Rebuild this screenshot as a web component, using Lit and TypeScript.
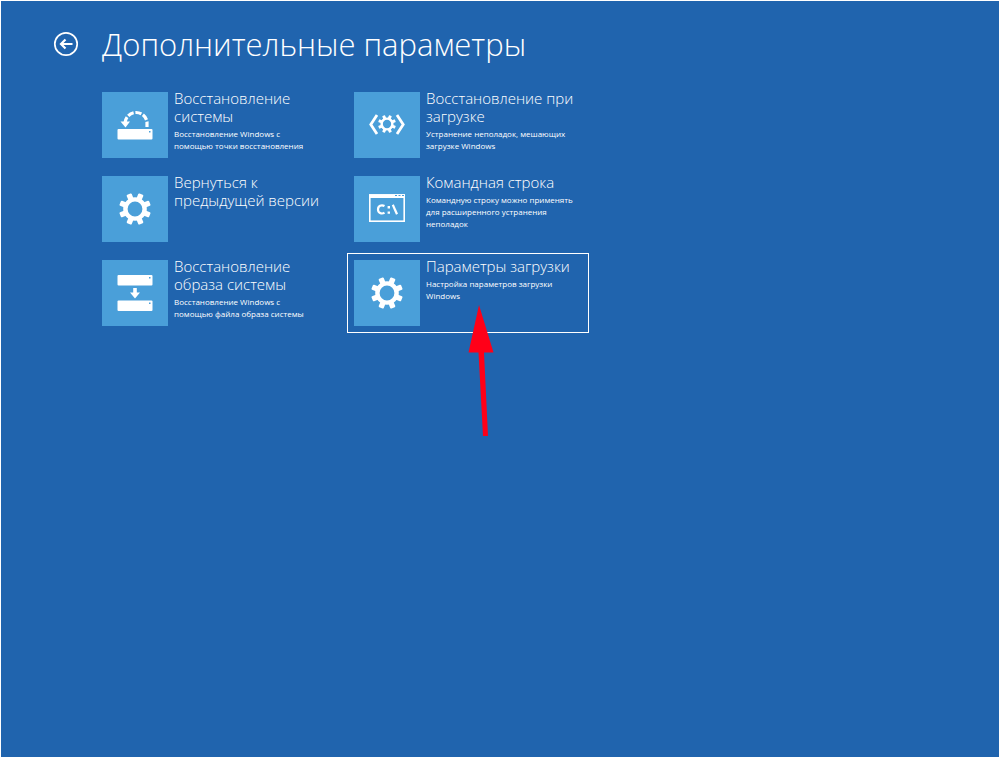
import { LitElement, html, svg, css, nothing } from "lit";
import { customElement, property, state } from "lit/decorators.js";
import { classMap } from "lit/directives/class-map.js";

type IconName = "restore" | "gear" | "image" | "startup" | "prompt";

interface Option {
  icon: IconName;
  title: string;
  text?: string;
}

const OPTIONS: Option[] = [
  { icon: "restore", title: "Восстановление системы", text: "Восстановление Windows с\nпомощью точки восстановления" },
  { icon: "startup", title: "Восстановление при загрузке", text: "Устранение неполадок, мешающих\nзагрузке Windows" },
  { icon: "gear", title: "Вернуться к предыдущей версии" },
  { icon: "prompt", title: "Командная строка", text: "Командную строку можно применять\nдля расширенного устранения\nнеполадок" },
  { icon: "image", title: "Восстановление образа системы", text: "Восстановление Windows с\nпомощью файла образа системы" },
  { icon: "gear", title: "Параметры загрузки", text: "Настройка параметров загрузки\nWindows" },
];

const TEETH = [22.5, 67.5, 112.5, 157.5, 202.5, 247.5, 292.5, 337.5];

// A ring with eight teeth, centred on the origin, about 16 units in radius.
const gear = svg`
  <circle r="9.6" fill="none" stroke="#fff" stroke-width="4.4"></circle>
  ${TEETH.map((a) => svg`<rect x="-2.7" y="-16" width="5.4" height="6" rx="1" fill="#fff" transform="rotate(${a})"></rect>`)}
`;

const ICONS = {
  gear: svg`<g transform="translate(33 33)">${gear}</g>`,
  startup: svg`
    <g transform="translate(33 32) scale(0.56)">${gear}</g>
    <path d="M23 23 16.8 32.5 23 42M43 23 49.2 32.5 43 42" fill="none" stroke="#fff" stroke-width="2.8"></path>
  `,
  restore: svg`
    <rect x="15.5" y="37" width="35" height="10.5" rx="1" fill="#fff"></rect>
    <rect x="47" y="39" width="1.5" height="1.5" fill="#4a9fd9"></rect>
    <path d="M23.2 31V30A11 11 0 0 1 45 30V35" fill="none" stroke="#fff" stroke-width="3.2" stroke-dasharray="6.2 1.8"></path>
    <path d="M18.5 29.5H28L23.5 35.5Z" fill="#fff"></path>
  `,
  image: svg`
    <rect x="15.5" y="15" width="35" height="10.5" rx="1" fill="#fff"></rect>
    <rect x="47" y="17" width="1.5" height="1.5" fill="#4a9fd9"></rect>
    <rect x="15.5" y="40.5" width="35" height="10.5" rx="1" fill="#fff"></rect>
    <rect x="47" y="42.5" width="1.5" height="1.5" fill="#4a9fd9"></rect>
    <path d="M31.2 28H34.8V32.5H38L33 38.5 28 32.5H31.2Z" fill="#fff"></path>
  `,
  prompt: svg`
    <rect x="15.8" y="19" width="34.4" height="26.2" fill="none" stroke="#fff" stroke-width="1.6"></rect>
    <path d="M15 18.2H51V22H15Z" fill="#fff"></path>
    <path d="M41 19.5H43M44.5 19.5H46.5M48 19.5H50" stroke="#4a9fd9"></path>
    <path d="M30.5 30C27.5 28.4 24 29.8 24 33.4S27.5 38.4 30.5 36.8" fill="none" stroke="#fff" stroke-width="2.2"></path>
    <path d="M33.6 30H36V32.4H33.6ZM33.6 35.4H36V37.8H33.6Z" fill="#fff"></path>
    <path d="M38.8 28.8 43 38.2" fill="none" stroke="#fff" stroke-width="2.2"></path>
  `,
};

@customElement("option-tile")
class OptionTile extends LitElement {
  @property({ attribute: false }) option!: Option;
  @property({ type: Boolean }) selected = false;

  static styles = css`
    :host {
      display: block;
    }
    .tile {
      display: flex;
      align-items: flex-start;
      gap: 6px;
      box-sizing: border-box;
      width: 100%;
      min-height: 80px;
      margin: 0;
      padding: 6px;
      border: 1px solid transparent;
      background: none;
      color: #fff;
      font: inherit;
      text-align: left;
      cursor: pointer;
    }
    .selected {
      border-color: #fff;
    }
    .tile:focus-visible {
      outline: 1px solid #fff;
    }
    .icon {
      flex: none;
      width: 66px;
      height: 66px;
      background: #4a9fd9;
    }
    .copy {
      display: block;
      min-width: 0;
    }
    .title {
      display: block;
      max-width: 148px;
      margin-top: -3px;
      font-size: 15px;
      font-weight: 300;
      line-height: 18px;
    }
    .text {
      display: block;
      margin-top: 3px;
      font-size: 8px;
      font-weight: 400;
      line-height: 12px;
      white-space: pre-line;
    }
  `;

  render() {
    const { icon, title, text } = this.option;
    return html`
      <button type="button" class=${classMap({ tile: true, selected: this.selected })}>
        <svg class="icon" viewBox="0 0 66 66" aria-hidden="true">${ICONS[icon]}</svg>
        <span class="copy">
          <span class="title">${title}</span>
          ${text ? html`<span class="text">${text}</span>` : nothing}
        </span>
      </button>
    `;
  }
}

@customElement("app-root")
class AppRoot extends LitElement {
  @state() private current = 5;

  static styles = css`
    :host {
      display: block;
      box-sizing: border-box;
      min-height: 100vh;
      padding: 24px 52px;
      border: 1px solid #fff;
      background: #2064ae;
      color: #fff;
      font-family: "Open Sans", "Noto Sans", sans-serif;
    }
    .header {
      display: flex;
      align-items: flex-start;
      gap: 23px;
    }
    .back {
      display: block;
      width: 26px;
      height: 26px;
      margin: 6px 0 0;
      padding: 0;
      border: 0;
      background: none;
      cursor: pointer;
    }
    .glyph {
      display: block;
      width: 26px;
      height: 26px;
    }
    .heading {
      margin: 0;
      font-size: 31px;
      font-weight: 300;
      line-height: 38px;
    }
    .options {
      display: grid;
      grid-template-columns: repeat(2, minmax(0, 242px));
      gap: 4px 10px;
      margin: 0;
      padding: 22px 0 0 42px;
      list-style: none;
    }
    .cell {
      position: relative;
    }
    .pointer {
      position: absolute;
      top: 52px;
      left: 120px;
      width: 28px;
      height: 132px;
      pointer-events: none;
    }
  `;

  render() {
    return html`
      <header class="header">
        <button class="back" type="button" aria-label="Назад">
          <svg class="glyph" viewBox="0 0 26 26" fill="none" stroke="#fff" aria-hidden="true">
            <circle cx="13" cy="13" r="11.2" stroke-width="1.7"></circle>
            <path d="M19.5 13H8M12.5 8.5 8 13 12.5 17.5" stroke-width="2.2"></path>
          </svg>
        </button>
        <h1 class="heading">Дополнительные параметры</h1>
      </header>
      <ul class="options">
        ${OPTIONS.map(
          (option, i) => html`
            <li class="cell">
              <option-tile .option=${option} ?selected=${i === this.current} @click=${() => (this.current = i)}></option-tile>
              ${i === OPTIONS.length - 1
                ? html`<svg class="pointer" viewBox="0 0 28 132" aria-hidden="true">
                    <path d="M12 0 26.5 47.5H17L21 131H16L11.5 47.5H1.5Z" fill="#ff0018"></path>
                  </svg>`
                : nothing}
            </li>
          `,
        )}
      </ul>
    `;
  }
}
